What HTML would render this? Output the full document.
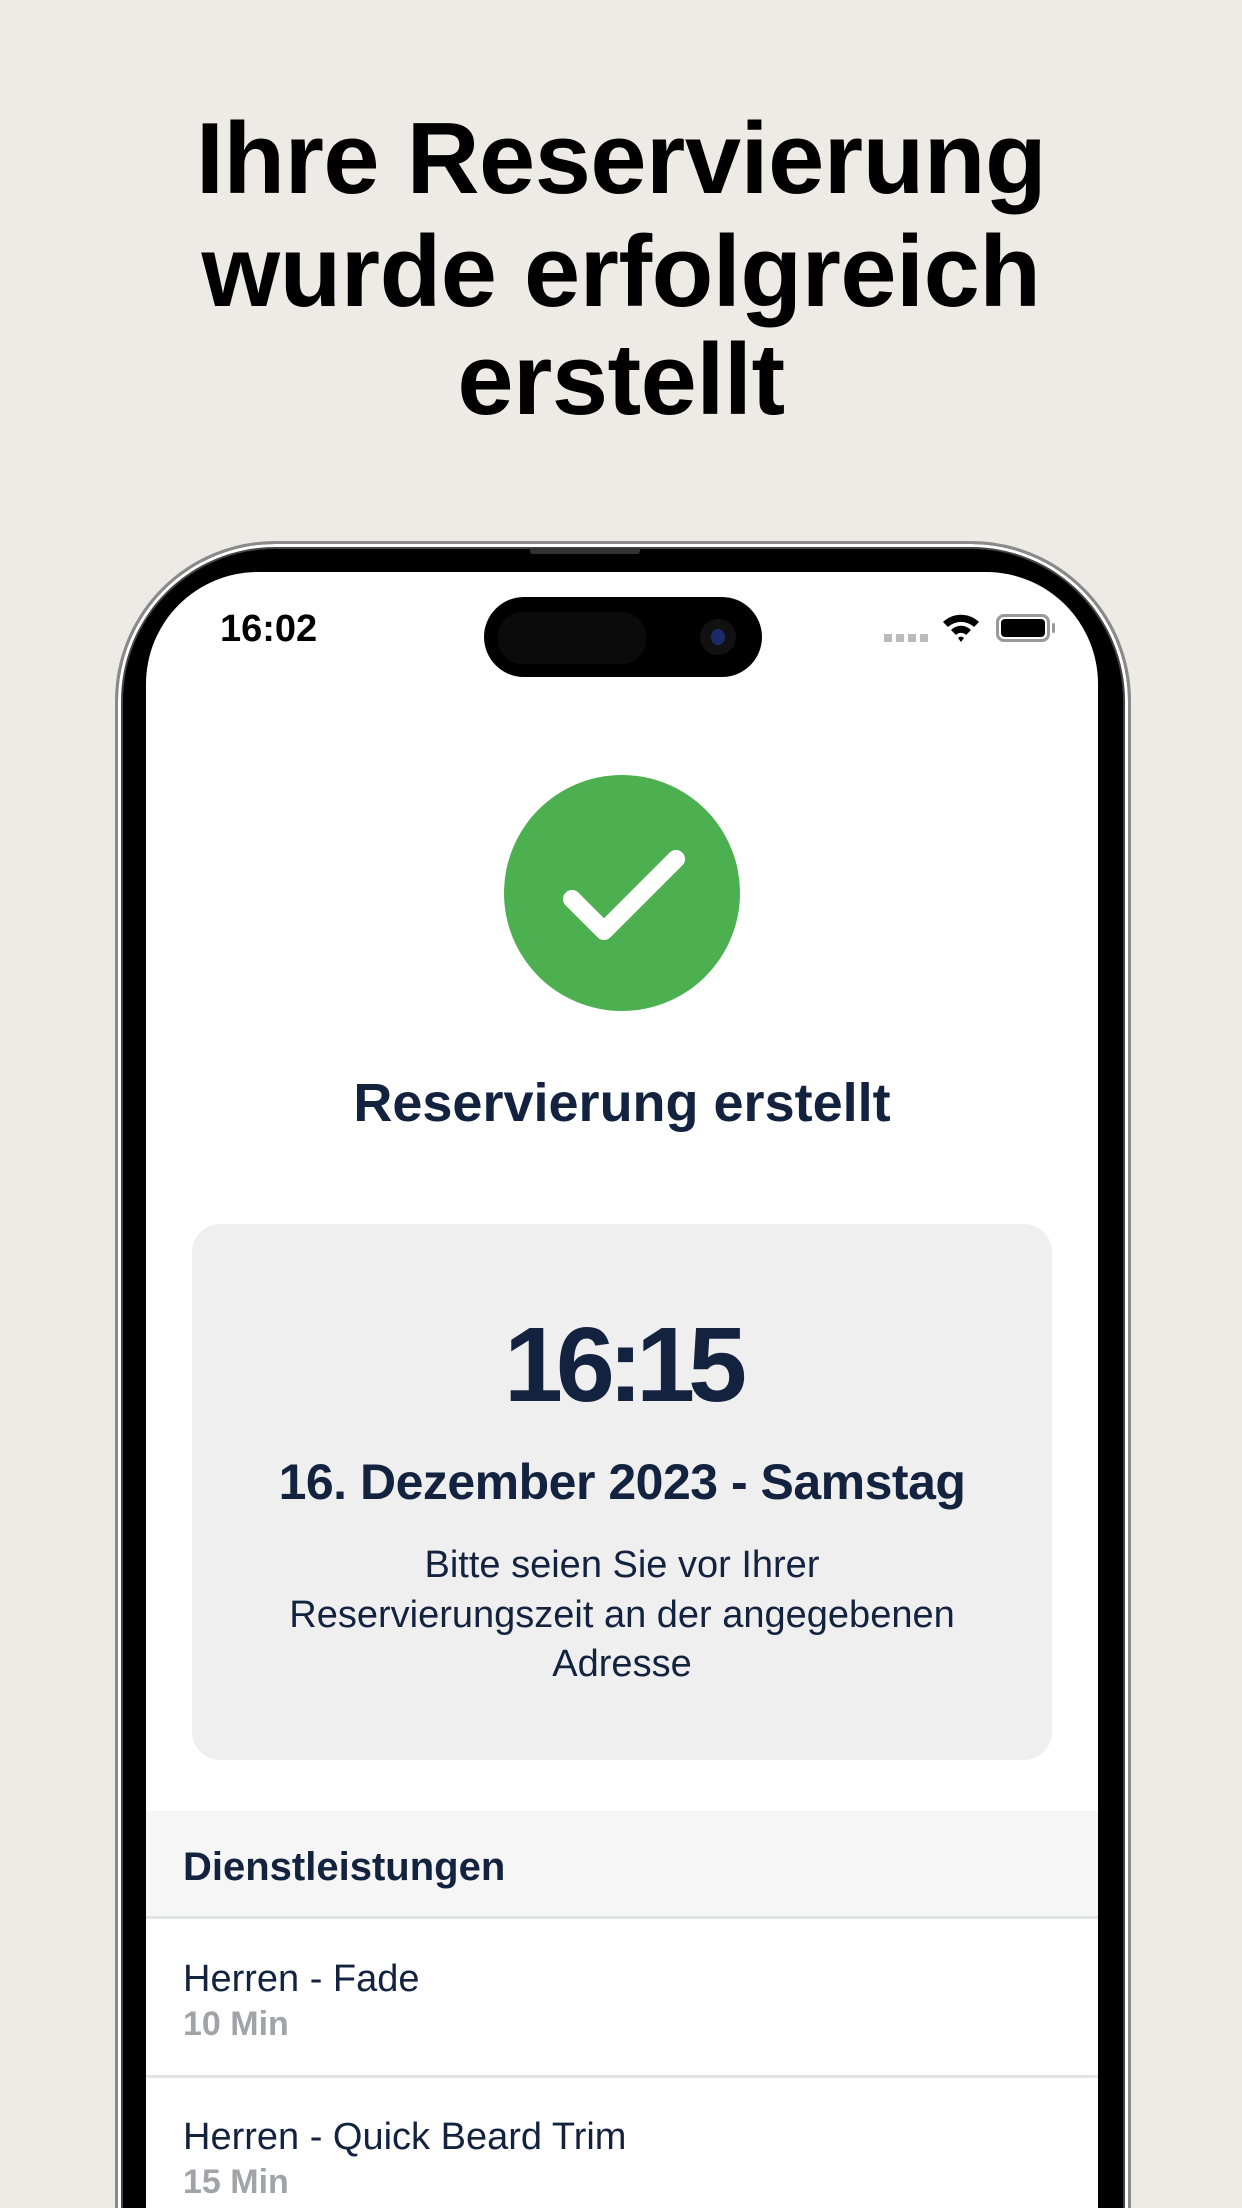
<!DOCTYPE html>
<html><head><meta charset="utf-8">
<style>
*{margin:0;padding:0;box-sizing:border-box}
html,body{width:1242px;height:2208px;overflow:hidden}
body{background:#eeebe6;font-family:"Liberation Sans",sans-serif}
#w{position:relative;width:1242px;height:2208px;overflow:hidden}
.t{position:absolute;left:0;width:1242px;text-align:center;white-space:nowrap}
.h{font-weight:bold;font-size:101px;color:#000;line-height:110px;letter-spacing:-0.5px}
.frame{position:absolute;left:115px;top:541px;width:1016px;height:1720px;border-radius:160px 160px 0 0;background:#000;border:3px solid #8a8a8a;box-shadow:inset 0 0 0 3px #fff,inset 0 0 0 5px #444}
.screen{position:absolute;left:146px;top:572px;width:952px;height:1636px;border-radius:112px 112px 0 0;background:#fff;overflow:hidden}
.n{color:#13233f}
</style></head><body><div id="w">
<div class="t h" style="top:104px">Ihre Reservierung</div>
<div class="t h" style="top:217px">wurde erfolgreich</div>
<div class="t h" style="top:325px">erstellt</div>

<div class="frame"></div>
<div style="position:absolute;left:530px;top:548px;width:110px;height:6px;background:#333;border-radius:3px"></div>
<div class="screen">
  <div style="position:absolute;left:74px;top:36px;font-size:38px;font-weight:bold;color:#000">16:02</div>
  <div style="position:absolute;left:338px;top:25px;width:278px;height:80px;border-radius:40px;background:#000">
    <div style="position:absolute;left:14px;top:15px;width:148px;height:52px;border-radius:24px;background:#0b0b0b"></div>
    <div style="position:absolute;left:216px;top:22px;width:36px;height:36px;border-radius:50%;background:#111"><div style="position:absolute;left:11px;top:10px;width:14px;height:16px;border-radius:50%;background:#1b2a6b"></div></div>
  </div>
  <div style="position:absolute;left:738px;top:62px;width:44px;height:8px;background:repeating-linear-gradient(90deg,#bbb 0 8px,transparent 8px 12px)"></div>
  <svg style="position:absolute;left:795px;top:40px" width="40" height="32" viewBox="0 0 40 32"><path d="M2 10 A26 26 0 0 1 38 10 L33 15 A19 19 0 0 0 7 15Z M10 18 A14 14 0 0 1 30 18 L25 23 A7 7 0 0 0 15 23Z M17 26 L20 30 L23 26 A4 4 0 0 0 17 26Z" fill="#000"/></svg>
  <div style="position:absolute;left:850px;top:42px;width:54px;height:28px;border:3px solid #999;border-radius:8px;padding:2px"><div style="width:100%;height:100%;background:#000;border-radius:4px"></div></div>
  <div style="position:absolute;left:906px;top:51px;width:3px;height:10px;background:#999;border-radius:2px"></div>

  <div style="position:absolute;left:358px;top:203px;width:236px;height:236px;border-radius:50%;background:#4caf50"></div>
  <svg style="position:absolute;left:358px;top:203px" width="236" height="236" viewBox="0 0 236 236"><path d="M68 124 L100 156 L172 84" stroke="#fff" stroke-width="18" fill="none" stroke-linecap="round" stroke-linejoin="round"/></svg>

  <div class="t n" style="left:0;width:952px;top:500px;font-size:54px;font-weight:bold;line-height:62px">Reservierung erstellt</div>

  <div style="position:absolute;left:46px;top:652px;width:860px;height:536px;border-radius:28px;background:#efefef"></div>
  <div class="t n" style="left:0;width:952px;top:733px;font-size:106px;font-weight:bold;line-height:120px;letter-spacing:-7px">16:15</div>
  <div class="t n" style="left:0;width:952px;top:881px;font-size:50px;font-weight:bold;line-height:58px;letter-spacing:-0.5px">16. Dezember 2023 - Samstag</div>
  <div class="t n" style="left:0;width:952px;top:969px;font-size:38px;line-height:49.5px">Bitte seien Sie vor Ihrer<br>Reservierungszeit an der angegebenen<br>Adresse</div>

  <div style="position:absolute;left:0;top:1239px;width:952px;height:108px;background:#f6f6f6;border-bottom:3px solid #e2e3e6"></div>
  <div class="n" style="position:absolute;left:37px;top:1273px;font-size:40px;font-weight:bold;line-height:44px">Dienstleistungen</div>
  <div class="n" style="position:absolute;left:37px;top:1385px;font-size:38px;line-height:44px">Herren - Fade</div>
  <div style="position:absolute;left:37px;top:1432px;font-size:34px;font-weight:bold;line-height:40px;color:#a0a3a8">10 Min</div>
  <div style="position:absolute;left:0;top:1503px;width:952px;height:3px;background:#e2e3e6"></div>
  <div class="n" style="position:absolute;left:37px;top:1543px;font-size:38px;line-height:44px">Herren - Quick Beard Trim</div>
  <div style="position:absolute;left:37px;top:1590px;font-size:34px;font-weight:bold;line-height:40px;color:#a0a3a8">15 Min</div>
</div>
</div></body></html>
